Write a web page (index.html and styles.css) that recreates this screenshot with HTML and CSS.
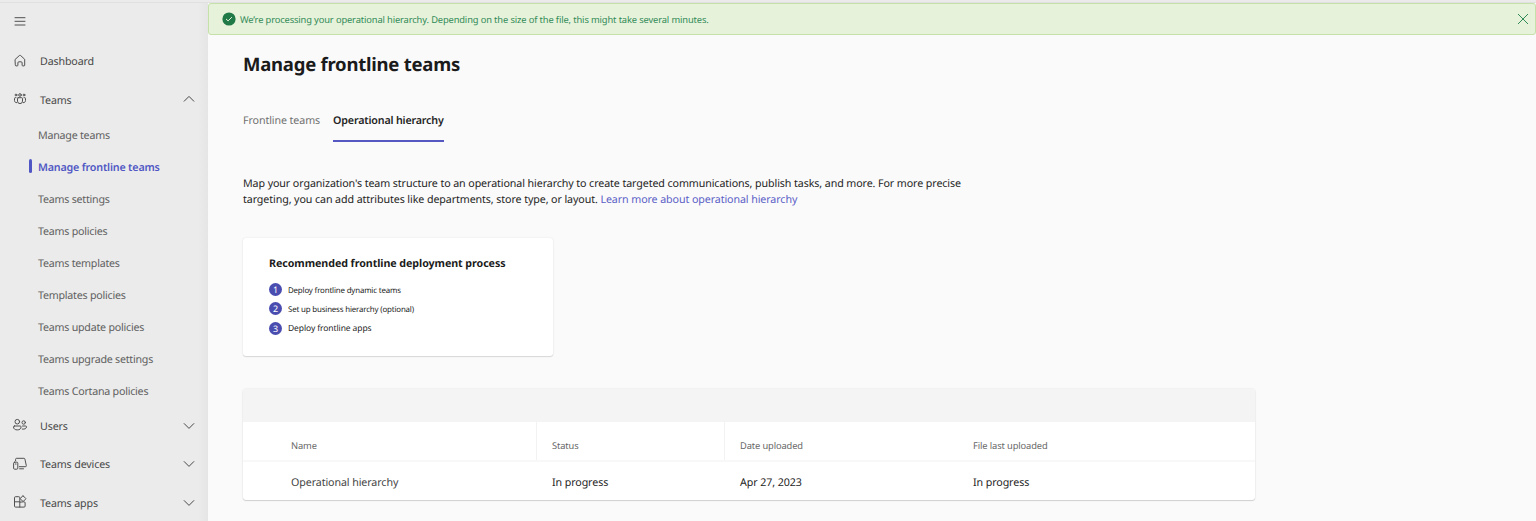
FILE: index.html
```html
<!DOCTYPE html>
<html lang="en">
<head>
<meta charset="utf-8">
<title>Manage frontline teams</title>
<link rel="stylesheet" href="styles.css">
</head>
<body>
<div class="topline"></div>
<div class="shell">
  <nav class="sidebar">
    <div class="menu-toggle">
      <svg class="icon" viewBox="0 0 16 16"><path d="M3 4.700h10M3 8.300h10M3 12h10"/></svg>
    </div>
    <a class="nav-item"><svg class="icon" viewBox="0 0 16 16"><path d="M3.300 6.300 7.400 2.500a.9.900 0 0 1 1.200 0l4.100 3.800v5.900a.7.700 0 0 1-.7.700h-1.200a.7.700 0 0 1-.7-.7V9.800a1 1 0 0 0-1-1H6.900a1 1 0 0 0-1 1v2.400a.7.700 0 0 1-.7.700H4a.7.700 0 0 1-.7-.7z"/></svg><span>Dashboard</span></a>
    <a class="nav-item"><svg class="icon" viewBox="0 0 16 16"><circle cx="8" cy="4" r="1.300"/><circle cx="4" cy="4" r=".9"/><circle cx="12" cy="4" r=".9"/><path d="M6.200 6.700h3.600a.7.700 0 0 1 .7.700v2.700a2.500 2.500 0 0 1-5 0V7.400a.7.700 0 0 1 .7-.7zM4 6.700h-.8a.7.700 0 0 0-.7.700v2.100c0 1.300.8 2.200 2.100 2.200M12 6.700h.8a.7.700 0 0 1 .7.700v2.100c0 1.300-.8 2.200-2.100 2.200"/></svg><span>Teams</span><svg class="chevron up" viewBox="0 0 12 12"><path d="M1.200 8.200 6 3.400l4.800 4.800"/></svg></a>
    <div class="subnav">
      <a>Manage teams</a>
      <a class="active">Manage frontline teams</a>
      <a>Teams settings</a>
      <a>Teams policies</a>
      <a>Teams templates</a>
      <a>Templates policies</a>
      <a>Teams update policies</a>
      <a>Teams upgrade settings</a>
      <a>Teams Cortana policies</a>
    </div>
    <a class="nav-item"><svg class="icon" viewBox="0 0 16 16"><circle cx="5.300" cy="4.700" r="2.300"/><circle cx="11.700" cy="5.500" r="1.700"/><path d="M2.400 9h5.800c.6 0 .9.400.9.900 0 2-1.600 3-3.800 3s-3.800-1-3.800-3c0-.5.3-.9.900-.9zM10.500 9h3.200c.5 0 .8.300.8.800 0 1.700-1.700 2.700-4.200 2.300"/></svg><span>Users</span><svg class="chevron" viewBox="0 0 12 12"><path d="M1.200 3.600 6 8.400l4.800-4.800"/></svg></a>
    <a class="nav-item"><svg class="icon" viewBox="0 0 16 16"><rect x="1.600" y="6.200" width="4.200" height="7" rx="1"/><path d="M3.300 8h.8M3.600 4.800V3.300a1 1 0 0 1 1-1h7.300a1 1 0 0 1 1 .8l1.400 6.400a1 1 0 0 1-1 1.200H7.300M7.600 12.800h3.900"/></svg><span>Teams devices</span><svg class="chevron" viewBox="0 0 12 12"><path d="M1.200 3.600 6 8.400l4.800-4.800"/></svg></a>
    <a class="nav-item"><svg class="icon" viewBox="0 0 16 16"><path d="M7.800 7.800V3.700a1 1 0 0 0-1-1H3.500a1 1 0 0 0-1 1v8.400a1 1 0 0 0 1 1h8.600a1 1 0 0 0 1-1V8.800a1 1 0 0 0-1-1zM2.500 7.800h5.300v5.300M11.200 1.900l2.500 2.500a.4.400 0 0 1 0 .6l-2.200 2.200a.6.600 0 0 1-.8 0L8.500 5a.5.500 0 0 1 0-.7l2.200-2.400a.4.400 0 0 1 .5 0z"/></svg><span>Teams apps</span><svg class="chevron" viewBox="0 0 12 12"><path d="M1.200 3.600 6 8.400l4.800-4.800"/></svg></a>
  </nav>
  <main class="main">
    <div class="banner">
      <svg class="check" viewBox="0 0 14 14"><circle cx="7" cy="7" r="6.600"/><path d="m4.300 7.200 1.800 1.700 3.500-3.500"/></svg>
      <span>We’re processing your operational hierarchy. Depending on the size of the file, this might take several minutes.</span>
      <svg class="close" viewBox="0 0 12 12"><path d="m1.300 1.300 9.400 9.400M10.700 1.300l-9.400 9.400"/></svg>
    </div>
    <div class="content">
      <h1>Manage frontline teams</h1>
      <div class="tabs">
        <a class="tab">Frontline teams</a>
        <a class="tab selected">Operational hierarchy</a>
      </div>
      <p class="intro">Map your organization's team structure to an operational hierarchy to create targeted communications, publish tasks, and more. For more precise<br>targeting, you can add attributes like departments, store type, or layout. <a>Learn more about operational hierarchy</a></p>
      <section class="card">
        <h2>Recommended frontline deployment process</h2>
        <ol>
          <li><b>1</b><span class="step">Deploy frontline dynamic teams</span></li>
          <li><b>2</b><span class="step">Set up business hierarchy (optional)</span></li>
          <li><b>3</b><span class="step wide">Deploy frontline apps</span></li>
        </ol>
      </section>
      <section class="grid">
        <div class="toolbar"></div>
        <div class="row head"><div>Name</div><div>Status</div><div>Date uploaded</div><div>File last uploaded</div></div>
        <div class="row"><div class="name">Operational hierarchy</div><div>In progress</div><div>Apr 27, 2023</div><div>In progress</div></div>
      </section>
    </div>
  </main>
</div>
</body>
</html>
```
FILE: styles.css
```css
* { box-sizing: border-box; }
body {
  margin: 0;
  height: 521px;
  overflow: hidden;
  background: #fafafa;
  color: #242424;
  font: 10.7px/16px "Noto Sans", "Open Sans", sans-serif;
  letter-spacing: -.1px;
  text-rendering: geometricPrecision;
  white-space: nowrap;
}
svg { fill: none; flex: none; stroke-linecap: round; stroke-linejoin: round; }
.topline { height: 3px; background: #ebebeb; border-bottom: 1px solid #e0e0e0; }
.shell { display: flex; height: 518px; }

.sidebar {
  width: 208px;
  flex: none;
  background: linear-gradient(90deg, #ebebeb 198px, #e5e5e5);
  color: #484848;
}
.menu-toggle { height: 39px; padding: 10px 0 0 12px; }
.icon { width: 16px; height: 16px; stroke: #505050; stroke-width: 1; display: block; }
.nav-item { display: flex; align-items: center; height: 38.4px; padding: 0 13px 0 12px; }
.nav-item .icon { margin-bottom: 1px; }
.nav-item span { flex: 1; margin-left: 12px; padding-top: 2px; letter-spacing: -.15px; }
.chevron { width: 12px; height: 12px; stroke: #484848; stroke-width: 1; }
.chevron.up { margin-bottom: 2px; }
.subnav a { display: flex; align-items: center; height: 32px; padding: 2px 0 0 38px; color: #606060; letter-spacing: -.24px; }
.subnav .active {
  padding-left: 29px;
  color: #5057c4;
  font-weight: 600;
  letter-spacing: -.17px;
}
.active::before { content: ""; width: 3px; height: 14px; margin: -3px 6px 0 0; border-radius: 2px; background: #5057c4; }

.main { flex: 1; }
.banner {
  display: flex;
  align-items: center;
  height: 32px;
  padding: 0 6px 0 13px;
  border: 1px solid #c5e1a9;
  border-radius: 3px;
  background: #e7f2da;
  color: #2f8a57;
  font-size: 9.3px;
  letter-spacing: -.12px;
}
.banner span { flex: 1; margin-left: 4px; padding-top: 1px; }
.check { width: 14px; height: 14px; stroke: #e7f2da; }
.check circle { fill: #1f7a47; stroke: none; }
.close { width: 12px; height: 12px; stroke: #2f8a57; }

.content { padding: 16px 0 0 35px; }
h1 { margin: 0; font-size: 18.5px; line-height: 28px; font-weight: 700; letter-spacing: -.24px; color: #1b1b1b; }
.tabs { display: flex; gap: 13px; margin-top: 33px; }
.tab { height: 30px; padding-top: 1px; color: #707070; }
.selected { color: #242424; font-weight: 600; letter-spacing: -.17px; border-bottom: 2px solid #5558c0; }
.intro { margin: 34px 0 0; }
.intro a { color: #5b5fc7; }

.card {
  width: 310px;
  height: 118px;
  margin-top: 30px;
  padding: 18px 26px;
  border-radius: 3px;
  background: #fff;
  box-shadow: 0 1px 1px rgba(0,0,0,.12), 0 0 2px rgba(0,0,0,.1);
}
h2 { margin: 0; font-size: 10.7px; line-height: 16px; font-weight: 700; letter-spacing: -.07px; color: #1b1b1b; }
ol { margin: 8px 0 0; padding: 0; list-style: none; }
li { display: flex; align-items: center; height: 19.3px; }
li b {
  width: 13px;
  height: 13px;
  margin-right: 6px;
  border-radius: 50%;
  background: #4a4db0;
  color: #fff;
  font-size: 9px;
  line-height: 13px;
  font-weight: 400;
  letter-spacing: 0;
  text-align: center;
}
.step { font-size: 7.9px; padding-top: 2px; letter-spacing: -.17px; }
.step.wide { font-size: 8.5px; padding-top: 1px; letter-spacing: -.1px; }

.grid {
  width: 1012px;
  height: 111px;
  margin-top: 33px;
  border-radius: 3px;
  overflow: hidden;
  background: #fff;
  box-shadow: 0 1px 1px rgba(0,0,0,.14), 0 0 2px rgba(0,0,0,.12);
}
.toolbar { height: 33px; background: #f4f4f4; }
.row { display: grid; grid-template-columns: 294px 188px 233px 1fr; height: 39px; }
.row div { display: flex; align-items: center; padding: 2px 0 0 15px; }
.row div:first-child { padding-left: 48px; }
.row.head { height: 40px; border-bottom: 2px solid #f8f8f8; color: #666; font-size: 9.3px; letter-spacing: -.11px; }
.row.head div { padding-top: 9px; }
.head div:nth-child(-n+2) { border-right: 1px solid #f2f2f2; }
.row .name { color: #444; }
```
